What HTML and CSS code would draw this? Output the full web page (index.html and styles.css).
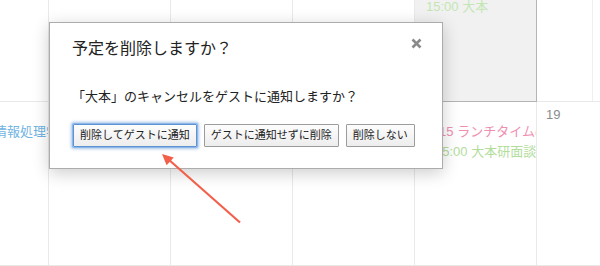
FILE: index.html
```html
<!DOCTYPE html>
<html lang="ja">
<head>
  <meta charset="UTF-8" />
  <title>予定を削除しますか？</title>
  <link rel="stylesheet" href="styles.css">
</head>
<body>

  <div class="calendar">
    <div class="cell"></div>
    <div class="cell"></div>
    <div class="cell"></div>
    <div class="cell"></div>
    <div class="cell busy">
      <div class="event green">15:00 大本</div>
    </div>
    <div class="cell last"><span class="split"></span></div>

    <div class="cell first-col">
      <div class="event blue">情報処理学会</div>
    </div>
    <div class="cell"></div>
    <div class="cell"></div>
    <div class="cell"></div>
    <div class="cell events">
      <div class="event pink">12:15 ランチタイム(研究室)</div>
      <div class="event green shift">15:00 大本研面談テスト</div>
    </div>
    <div class="cell last">
      <div class="date">19</div>
    </div>
  </div>

  <div class="dialog">
    <div class="dialog-head">
      <h2>予定を削除しますか？</h2>
      <span class="close">
        <svg width="11" height="11" viewBox="0 0 11 11">
          <path d="M1.5 1.5 L9.5 9.5 M9.5 1.5 L1.5 9.5" stroke="#8a8a8a" stroke-width="2.6" fill="none"/>
        </svg>
      </span>
    </div>
    <p class="message">「大本」のキャンセルをゲストに通知しますか？</p>
    <div class="buttons">
      <button class="btn focused">削除してゲストに通知</button>
      <button class="btn">ゲストに通知せずに削除</button>
      <button class="btn">削除しない</button>
    </div>
  </div>

  <!-- annotation arrow -->
  <svg class="arrow" width="600" height="266" viewBox="0 0 600 266">
    <line x1="240" y1="222.5" x2="168" y2="159" stroke="#f2604b" stroke-width="2.2"/>
    <polygon points="162,154 173.8,157.4 166.6,165.2" fill="#f2604b"/>
  </svg>

</body>
</html>
```

FILE: styles.css
```css
body {
  margin: 0;
  width: 600px;
  height: 266px;
  overflow: hidden;
  background: #fff;
  font-family: "Liberation Sans", "Noto Sans CJK JP", sans-serif;
  position: relative;
}

.calendar {
  display: grid;
  grid-template-columns: 49px 122px 122px 122px 122px 1fr;
  grid-template-rows: 102px 164px;
}

.cell {
  box-sizing: border-box;
  border-right: 1px solid #e9e9e9;
  border-bottom: 1px solid #e9e9e9;
  overflow: hidden;
  white-space: nowrap;
}

.cell.last {
  border-right: none;
  position: relative;
}

.cell.busy {
  background-color: #f1f1f1;
  border-right: 1px solid #b4b4b4;
  border-bottom: 1px solid #b4b4b4;
  padding: 0 0 0 11px;
}

.split {
  display: block;
  margin-left: 55px;
  height: 100%;
  border-left: 1px solid #efefef;
}

.event {
  font-size: 13px;
  line-height: 20px;
}

.busy .event {
  line-height: 14px;
}

.green {
  color: #b3dd9c;
}

.busy .green {
  color: #c3e6b3;
}

.pink {
  color: #f08eb0;
}

.blue {
  color: #72b4e2;
}

.first-col {
  padding-top: 20px;
}

.first-col .event {
  margin-left: -6px;
}

.events {
  padding: 20px 0 0 6px;
}

.events .shift {
  margin-left: 14px;
}

.date {
  font-size: 13px;
  line-height: 16px;
  color: #8c8c8c;
  padding: 5px 0 0 9px;
}

/* Dialog */
.dialog {
  position: absolute;
  left: 49px;
  top: 22px;
  width: 394px;
  box-sizing: border-box;
  background: #fff;
  border: 1px solid #acacac;
  box-shadow: 0 4px 16px rgba(0, 0, 0, 0.2);
  padding: 16px 20px 21px 22px;
}

.dialog-head {
  display: flex;
  justify-content: space-between;
  align-items: flex-start;
}

.dialog-head h2 {
  margin: 0;
  font-size: 16px;
  font-weight: normal;
  line-height: 20px;
  color: #222;
}

.close {
  display: block;
  margin-top: -1px;
  width: 11px;
  height: 11px;
  cursor: pointer;
}

.close svg {
  display: block;
}

.message {
  margin: 30px 0 0;
  font-size: 13px;
  line-height: 16px;
  color: #222;
}

.buttons {
  display: flex;
  gap: 7px;
  margin-top: 19px;
}

.btn {
  font-family: "Liberation Sans", "Noto Sans CJK JP", sans-serif;
  font-size: 11px;
  line-height: 13px;
  color: #222;
  height: 23px;
  padding: 0 6px;
  border: 1px solid #9c9c9c;
  border-radius: 1px;
  background: linear-gradient(#fdfdfd, #ededed);
  cursor: pointer;
}

.btn.focused {
  margin-left: 1px;
  border-color: #5b93d3;
  box-shadow: 0 0 0 1px #8db7e6, 0 0 3px 2px rgba(110, 160, 220, 0.6);
}

.arrow {
  position: absolute;
  left: 0;
  top: 0;
  pointer-events: none;
}
```
